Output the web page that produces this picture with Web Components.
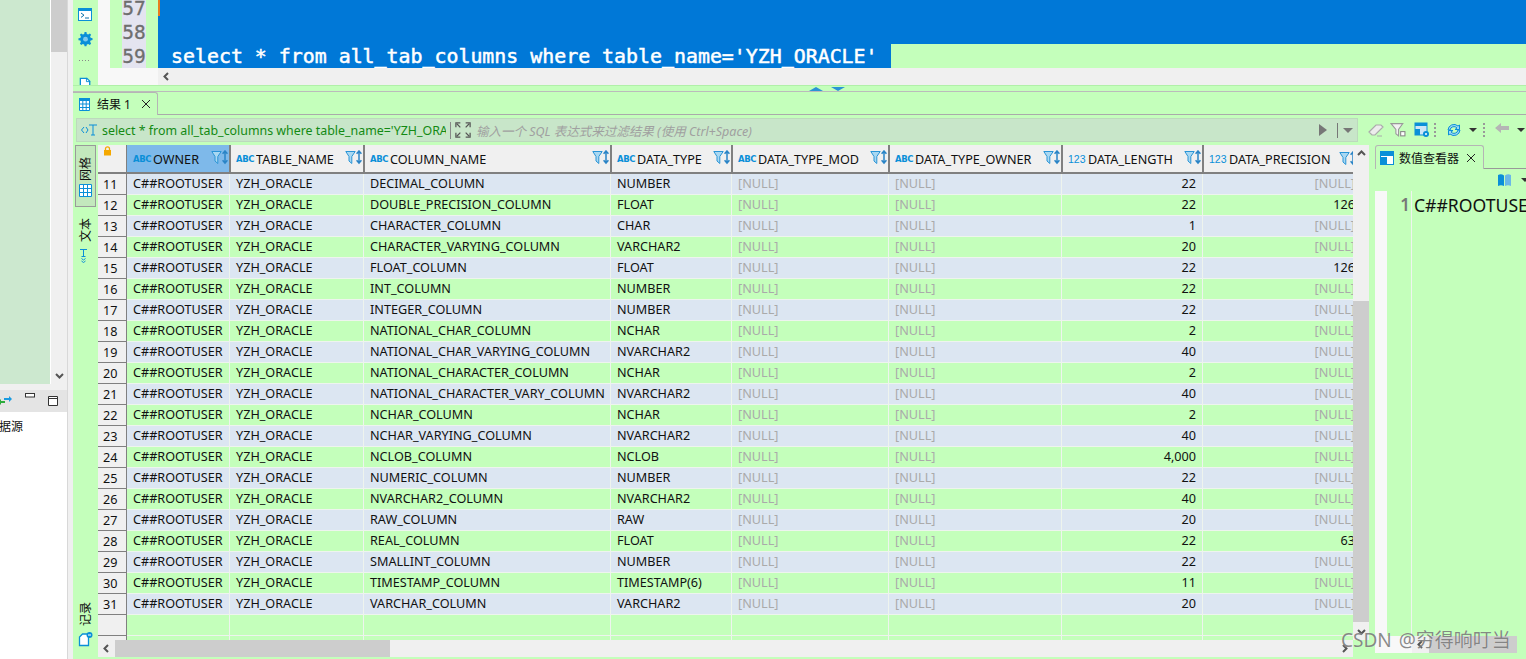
<!DOCTYPE html>
<html><head><meta charset="utf-8"><title>DBeaver</title>
<style>
html,body{margin:0;padding:0;height:659px;overflow:hidden;background:#c4ffbb}
body{font:12.65px "Noto Sans","Noto Sans CJK SC",sans-serif;color:#111}
</style></head><body>
<x-app></x-app>
<script>
const IC={
terminal:'<rect x=".5" y="1.5" width="13" height="12" fill="#fff" stroke="#0a8fd8"/><rect x="1" y="2" width="12" height="2" fill="#0a8fd8"/><path d="M3 6l3 2.2-3 2.2M7 11h4" fill="none" stroke="#0a6fa8"/>',
gear:'<path d="M7 0h2l.4 2 1.5.6L12.6 1.5 14 3l-1.1 1.7.6 1.5 2 .4v2l-2 .4-.6 1.5L14 12.3 12.6 13.8l-1.7-1.1-1.5.6L9 15.3H7l-.4-2-1.5-.6-1.7 1.1L2 12.3l1.1-1.7-.6-1.5-2-.4v-2l2-.4.6-1.5L2 3l1.4-1.5 1.7 1.1 1.5-.6z" fill="#0a8fd8"/><circle cx="8" cy="7.6" r="2.6" fill="#7cc8ee"/>',
doc:'<path d="M2.5 14V2.5h7l3 3V14z" fill="#fff" stroke="#0a8fd8" stroke-width="1.4"/><path d="M9 2v4h4" fill="none" stroke="#0a8fd8"/>',
table:'<path d="M1.5 1.5h10v12h-10z" fill="#fff" stroke="#0a8fd8"/><path d="M1 1h11v3H1z" fill="#0a8fd8"/><path d="M1.5 7h10M1.500 10.500h10M4.800 4v9.500M8.200 4v9.500" stroke="#0a8fd8" fill="none"/>',
grid:'<path d="M.5.5h12v12H.5zM.5 4.500h12M.5 8.500h12M4.500.5v12M8.500.5v12" fill="#fff" stroke="#0a8fd8"/>',
text:'<path d="M2 1.500h7M5.500 1.500v7M3.500 8.500h4" fill="none" stroke="#0a8fd8"/><path d="M3.500 10.500l2 1.500 2-1.500M3.500 13l2 1.500 2-1.500" fill="none" stroke="#0a8fd8"/>',
rec:'<path d="M1.500 13.500V5l3-3h6v11.500z" fill="#fff" stroke="#0a8fd8" stroke-width="1.300"/><circle cx="11.500" cy="3" r="3" fill="#0a8fd8"/><path d="M10 3h3" stroke="#fff"/>',
lock:'<rect x="1" y="4" width="7" height="5.500" fill="#f5a800"/><path d="M2.500 4.500V2.800a2 2 0 014 0v1.700" fill="none" stroke="#f5a800" stroke-width="1.300"/>',
filter:'<path d="M.8 1.500h9.400L6.800 6.500v7L4 11V6.500z" fill="#a9d8f2" stroke="#2a94d6"/><path d="M14 1v12M11.600 3.800L14 1l2.400 2.800M11.600 10.200L14 13l2.400-2.800" fill="none" stroke="#2a84c6" stroke-width="1.500"/>',
expand:'<path d="M1 6V1h5M12 1h5v5M1 12v5h5M17 12v5h-5" fill="none" stroke="#555" stroke-width="1.400"/><path d="M2 2l4 4M16 2l-4 4M2 16l4-4M16 16l-4-4" stroke="#555" stroke-width="1.400"/>',
eraser:'<path d="M1 10l7-7h5l2 2-8 8H4z" fill="#ececec" stroke="#aaa" stroke-width="1.200"/><path d="M9 14h5" stroke="#aaa"/>',
filt2:'<path d="M1 1.500h11L8 7v6L5.500 11V7z" fill="#f2f2f2" stroke="#999"/><rect x="10" y="9" width="4" height="4" fill="#fff" stroke="#888"/>',
gridcfg:'<rect x="1" y="1" width="12" height="12" fill="#cfe6f7" stroke="#0a8fd8"/><path d="M1 1h12v3H1zM1 7h5v6H1z" fill="#0a8fd8"/><circle cx="12" cy="12" r="3" fill="#0a8fd8"/><circle cx="12" cy="12" r="1" fill="#fff"/>',
refresh:'<path d="M2 8a6 6 0 0110-4l1.500-1v4.500H9L11 6a4 4 0 00-7 2zM14 8a6 6 0 01-10 4l-1.500 1V8.500H7L5 10a4 4 0 007-2z" fill="#9fd8f4" stroke="#0a8fd8"/>',
back:'<path d="M1 6l6-5v3h8v4H7v3z" fill="#b5b5b5"/>',
book:'<path d="M1 2c2-1 4-1 6 .5V13c-2-1-4-1-6 0z" fill="#0a8fd8"/><path d="M8 2.500c2-1.500 4-1.500 6-.5v11c-2-1-4-1-6 0z" fill="#6ab8e8"/>',
viewer:'<rect x=".5" y=".5" width="13" height="13" fill="#fff" stroke="#0a8fd8"/><path d="M1 1h12v4H1zM1 6h6v7H1z" fill="#0a8fd8"/>',
swap:'<path d="M1 8h6" stroke="#2cab3c" stroke-width="2"/><path d="M3 5L0 8l3 3z" fill="#2cab3c"/><path d="M6 5h7" stroke="#1a9be0" stroke-width="2"/><path d="M11 2l3 3-3 3z" fill="#1a9be0"/>',
min:'<rect x=".5" y=".5" width="9" height="3.500" fill="#fff" stroke="#333"/>',
max:'<path d="M.5 .5h9v9h-9zM.5 2.500h9" fill="#fff" stroke="#333"/>',
close:'<path d="M1 1l8 8M9 1l-8 8" stroke="#222" fill="none"/>'
};
function def(name,css,html,init){
  customElements.define(name,class extends HTMLElement{
    connectedCallback(){
      if(this.shadowRoot)return;
      const r=this.attachShadow({mode:'open'});
      r.innerHTML='<style>'+css+'</style>'+(typeof html==='function'?html(this):html);
      if(init)init(this,r);
    }
  });
}
def('x-icon',':host{display:inline-flex;flex:none}svg{display:block}',h=>{
  const n=h.getAttribute('name'),s=h.getAttribute('size')||16,b=h.getAttribute('box')||16;
  return `<svg width="${s}" height="${s}" viewBox="0 0 ${b} ${b}">${IC[n]}</svg>`;
});
/* scrollbar */
def('x-scroll',`
:host{display:flex;flex:none;background:#f0f0f0;overflow:hidden}
:host([dir=h]){height:17px;align-items:center}
:host([dir=v]){width:16px;flex-direction:column;align-items:stretch}
.a{flex:none;display:flex;align-items:center;justify-content:center}
:host([dir=h]) .a{width:17px;height:17px}
:host([dir=v]) .a{height:17px;width:16px}
.s{flex:var(--before,0) 0 0}
.t{background:#cdcdcd;flex:var(--thumb,1) 0 0;align-self:stretch}
.e{flex:var(--after,0) 0 0}
svg{display:block}
`,h=>{
  const v=h.getAttribute('dir')==='v';
  const ch=d=>`<svg width="9" height="9" viewBox="0 0 9 9"><path d="${d}" fill="none" stroke="#555" stroke-width="2"/></svg>`;
  const a=h.hasAttribute('noa')?'':`<div class="a">${ch(v?'M1 6l3.500-3.500L8 6':'M6 1L2.500 4.500 6 8')}</div>`;
  const b=h.hasAttribute('noz')?'':`<div class="a">${ch(v?'M1 3l3.500 3.500L8 3':'M3 1l3.500 3.500L3 8')}</div>`;
  return a+'<div class="s"></div><div class="t"></div><div class="e"></div>'+b;
});
/* left navigator column */
def('x-nav',`
:host{display:flex;flex-direction:column;width:68px;flex:none;height:659px;background:#f0f0f0;border-right:1px solid #d8d8d8;box-sizing:border-box}
.top{height:384px;display:flex;flex:none;background:#fff}
.tree{width:50px;background:#cce8cf;flex:none;margin-right:1px}
.gap{height:6px;flex:none}
.hd{height:22px;flex:none;background:#e4e4e4;display:flex;align-items:center;gap:13px;overflow:hidden}
.hd .sw{margin-left:-2px}
.bd{flex:1;background:#fff;padding:6px 0 0;font-size:12px;line-height:18px;overflow:hidden;text-indent:-1px}
.mm{margin-left:-1px}
`,`
<div class="top"><div class="tree"></div><x-scroll dir="v" noa style="--before:0;--thumb:52;--after:315"></x-scroll></div>
<div class="gap"></div>
<div class="hd"><x-icon class="sw" name="swap" size="15" box="15"></x-icon><x-icon class="mm" name="min" size="10" box="10" style="margin-top:-6px"></x-icon><x-icon name="max" size="10" box="10"></x-icon></div>
<div class="bd">据源</div>
`);
/* SQL editor */
def('x-editor',`
:host{display:flex;flex:none;height:85px;background:#f8f8f8;overflow:hidden}
.tools{width:25px;flex:none;background:#c4ffbb;display:flex;flex-direction:column;align-items:flex-start;padding:7px 0 0 5px;box-sizing:border-box}
.tools x-icon:nth-child(2){margin-top:10px}
.dots{margin:13px 0 0 1px;height:1px;width:12px;background:repeating-linear-gradient(90deg,#888 0 1px,transparent 1px 3px);flex:none}
.tools x-icon:last-child{margin-top:15px}
.main{flex:1;min-width:0;display:flex;flex-direction:column}
.code{height:68px;overflow:hidden;flex:none;display:flex;flex-direction:column;justify-content:flex-end}
.ln{display:flex;height:24px;flex:none;font:19.9px/26px "DejaVu Sans Mono",monospace}
.g0{width:12px;background:#f8f8f8;flex:none}
.g1{width:12px;background:#c4ffbb;flex:none}
.no{width:24px;flex:none;background:#e4e4f0;color:#6e6e6e;font-size:19.5px;text-align:center;-webkit-text-stroke:.3px #6e6e6e}
.g2{width:12px;background:#c4ffbb;flex:none}
.tx{flex:1;background:#0078d7;position:relative}
.ln.s .tx{background:#c4ffbb}
.sel{background:#0078d7;color:#fff;display:inline-block;padding:0 13px 0 13px;height:24px;-webkit-text-stroke:.5px #fff}
.caret{position:absolute;left:0;top:0;width:2px;height:20px;background:#e87d1e}
.hs{display:flex;height:17px;flex:none}
.hs .pad{width:60px;background:#f8f8f8;flex:none}
x-scroll{flex:1}
`,`
<div class="tools"><x-icon name="terminal" size="15" box="15"></x-icon><x-icon name="gear" size="15"></x-icon><div class="dots"></div><x-icon name="doc" size="15"></x-icon></div>
<div class="main"><div class="code">
<div class="ln"><i class="g0"></i><i class="g1"></i><span class="no">57</span><i class="g2"></i><span class="tx"><span class="caret"></span></span></div>
<div class="ln"><i class="g0"></i><i class="g1"></i><span class="no">58</span><i class="g2"></i><span class="tx"></span></div>
<div class="ln s"><i class="g0"></i><i class="g1"></i><span class="no">59</span><i class="g2"></i><span class="tx"><span class="sel">select * from all_tab_columns where table_name='YZH_ORACLE'</span></span></div>
</div><div class="hs"><div class="pad"></div><x-scroll dir="h" noz style="--thumb:0;--before:1"></x-scroll></div></div>
`);
/* result grid */
const ROWS=[[11,'DECIMAL_COLUMN','NUMBER',22,''],[12,'DOUBLE_PRECISION_COLUMN','FLOAT',22,126],[13,'CHARACTER_COLUMN','CHAR',1,''],[14,'CHARACTER_VARYING_COLUMN','VARCHAR2',20,''],[15,'FLOAT_COLUMN','FLOAT',22,126],[16,'INT_COLUMN','NUMBER',22,''],[17,'INTEGER_COLUMN','NUMBER',22,''],[18,'NATIONAL_CHAR_COLUMN','NCHAR',2,''],[19,'NATIONAL_CHAR_VARYING_COLUMN','NVARCHAR2',40,''],[20,'NATIONAL_CHARACTER_COLUMN','NCHAR',2,''],[21,'NATIONAL_CHARACTER_VARY_COLUMN','NVARCHAR2',40,''],[22,'NCHAR_COLUMN','NCHAR',2,''],[23,'NCHAR_VARYING_COLUMN','NVARCHAR2',40,''],[24,'NCLOB_COLUMN','NCLOB','4,000',''],[25,'NUMERIC_COLUMN','NUMBER',22,''],[26,'NVARCHAR2_COLUMN','NVARCHAR2',40,''],[27,'RAW_COLUMN','RAW',20,''],[28,'REAL_COLUMN','FLOAT',22,63],[29,'SMALLINT_COLUMN','NUMBER',22,''],[30,'TIMESTAMP_COLUMN','TIMESTAMP(6)',11,''],[31,'VARCHAR_COLUMN','VARCHAR2',20,'']];
const COLS=[['OWNER',103,'a'],['TABLE_NAME',134,'a'],['COLUMN_NAME',247,'a'],['DATA_TYPE',121,'a'],['DATA_TYPE_MOD',157,'a'],['DATA_TYPE_OWNER',173,'a'],['DATA_LENGTH',141,'n'],['DATA_PRECISION',155,'n']];
const W='29px '+COLS.map(c=>c[1]+'px').join(' ');
def('x-grid',`
:host{display:block;flex:1;min-width:0;overflow:hidden;font-size:12.65px}
.r{display:grid;grid-template-columns:${W};height:21px;box-sizing:border-box;border-bottom:1px solid #eef4ee;background:#c4ffbb}
.r.b{background:#dce6f2}
.r.h{height:29px;background:#f0f0f0;border-bottom:2px solid #808080}
.c{border-right:1px solid #eef4ee;padding:0 6px;line-height:19px;white-space:nowrap;overflow:hidden;box-sizing:border-box;min-width:0}
.n{text-align:right}.null{color:#aaa}
.idx{background:#f0f0f0;border-right:1px solid #808080;border-bottom:1px solid #808080;margin-bottom:-1px;padding:1px 0 0 5px;line-height:19px}
.h .c{display:flex;align-items:center;border-right:2px solid #808080;padding:0 0 0 6px;line-height:27px;height:27px;position:relative;margin-right:-1px}
.h .c:last-child{margin-right:0}
.h .sel{background:#7eb9ea}
.h .corner{border-right:1px solid #808080;padding:1px 0 0 5px;align-items:flex-start;margin-right:0}
.ty{flex:none;width:20px;color:#0a8fd8;font:bold 8.500px/27px "DejaVu Sans",sans-serif;letter-spacing:-.4px;margin-top:1px}
.ty.num{font:10.500px/27px "Liberation Sans",sans-serif;letter-spacing:0}
.nm{flex:1;min-width:0;overflow:hidden;margin-top:2px}
.f{flex:none;margin:0 1px 0 0}
.h .c:last-child .f{margin-right:0;position:absolute;left:136px;top:6px}
`,()=>{
  let s=`<div class="r h"><div class="c corner"><x-icon name="lock" size="10" box="10"></x-icon></div>`;
  COLS.forEach((c,i)=>{s+=`<div class="c${i==0?' sel':''}"><span class="ty${c[2]=='n'?' num':''}">${c[2]=='n'?'123':'ABC'}</span><span class="nm">${c[0]}</span><x-icon class="f" name="filter" size="17" box="17"></x-icon></div>`});
  s+='</div>';
  const N='<div class="c null">[NULL]</div>';
  ROWS.forEach((r,i)=>{
    s+=`<div class="r${i%2==0?' b':''}"><div class="c idx">${r[0]}</div><div class="c">C##ROOTUSER</div><div class="c">YZH_ORACLE</div><div class="c">${r[1]}</div><div class="c">${r[2]}</div>${N}${N}<div class="c n">${r[3]}</div><div class="c n${r[4]===''?' null':''}" style="padding-right:2px">${r[4]===''?'[NULL]':r[4]}</div></div>`;
  });
  const e=`<div class="r"><div class="c idx"></div>${COLS.map(()=>'<div class="c"></div>').join('')}</div>`;
  return s+e+e;
});
def('x-sidetab',`
:host{display:flex;flex-direction:column;align-items:center;width:21px;box-sizing:border-box;flex:none;gap:6px;font-size:12px;margin-left:2px}
:host([active]){background:#c3e8bd;border:1px solid #9a9a9a;height:62px;justify-content:flex-end;padding:0 0 9px;gap:3px}
.t{writing-mode:vertical-rl;text-orientation:sideways;transform:rotate(180deg);line-height:18px}
`,h=>`<span class="t"><slot></slot></span><x-icon name="${h.getAttribute('icon')}" size="${h.getAttribute('isz')||13}" box="${h.getAttribute('isz')||13}"></x-icon>`);
/* value viewer */
def('x-viewer',`
:host{display:flex;flex-direction:column;flex:1;min-width:0;overflow:hidden}
.tabs{display:flex;height:24px;flex:none;box-sizing:border-box;border-bottom:1px solid #999}
.tab{width:109px;box-sizing:border-box;height:24px;border:1px solid #b5b5b5;border-bottom:0;border-radius:3px 3px 0 0;background:#c4ffbb;display:flex;align-items:center;padding-left:4px;gap:5px;font-size:12px;flex:none;white-space:nowrap}
.tab x-icon:last-child{margin-left:2px}
.bar{height:22px;flex:none;display:flex;align-items:center;justify-content:flex-end;gap:9px;overflow:hidden}
.cr{width:0;height:0;border:4px solid transparent;border-top:4px solid #333;margin:4px -3px 0 0}
.body{flex:1;min-height:0;display:flex;overflow:hidden}
.g0{width:12px;background:#f8f8f8;flex:none}
.no{width:25px;box-sizing:border-box;text-align:right;padding-right:1px;font-size:17px;font-weight:600;color:#777;line-height:28px;border-right:1px solid #eef4ee;flex:none}
.tx{font-size:17.600px;line-height:28px;white-space:nowrap;padding-left:2px}
.hs{display:flex;flex:none;height:17px;margin-bottom:3px}
.hs i{width:37px;flex:none;background:#f8f8f8}
x-scroll{flex:1}
`,`
<div class="tabs"><div class="tab"><x-icon name="viewer" size="14" box="14"></x-icon>数值查看器<x-icon name="close" size="10" box="10"></x-icon></div></div>
<div class="bar"><x-icon name="book" size="15" box="15"></x-icon><i class="cr"></i></div>
<div class="body"><i class="g0"></i><div class="no">1</div><div class="tx">C##ROOTUSER</div></div>
<div class="hs"><i></i><x-scroll dir="h" noz style="--before:0;--thumb:88;--after:0;margin-right:9px"></x-scroll></div>
`);
/* results panel */
def('x-results',`
:host{display:flex;flex-direction:column;flex:1;min-height:0;background:#c4ffbb}
.strip{height:23px;flex:none;box-sizing:border-box;border-bottom:1px solid #aaa;display:flex}
.tab{width:85px;height:23px;box-sizing:border-box;border:1px solid #b5b5b5;border-bottom:0;border-left:0;border-radius:0 3px 0 0;display:flex;align-items:center;gap:5px;padding-left:5px;font-size:12px;white-space:nowrap;background:#c4ffbb;flex:none}
.tab x-icon:last-child{margin-left:5px}
.fl{height:30px;flex:none;display:flex;align-items:flex-start;padding-top:3px;box-sizing:border-box}
.box{margin-left:3px;width:1282px;height:24px;flex:none;box-sizing:border-box;background:#c8e6c9;border:1px solid #fff;display:flex;align-items:center;outline:1px solid #bdd9bd;outline-offset:-1px}
.q{width:374px;box-sizing:border-box;padding-right:4px;display:flex;align-items:center;color:#138a13;font-size:12.400px;overflow:hidden;white-space:nowrap;flex:none;border-right:1px solid #888;height:17px}
.q svg{flex:none;margin:0 4px 0 3px}
.q span{overflow:hidden;flex:1;min-width:0}
.ex{margin:0 5px 0 4px;flex:none}
.ph{color:#a0a0a0;font-style:italic;font-size:12.500px;flex:1;white-space:nowrap;overflow:hidden}
.run{width:0;height:0;border:6px solid transparent;border-left:8px solid #777;border-right:0;flex:none}
.sp{width:1px;height:15px;background:#777;margin:0 5px 0 10px;flex:none}
.cr{width:0;height:0;border:5px solid transparent;border-top:5px solid #777;border-bottom:0;margin-right:4px;flex:none}
.tb{flex:1;display:flex;align-items:center;height:24px;padding-left:10px;overflow:hidden}
.tb .c2{width:0;height:0;border:4px solid transparent;border-top:4px solid #333;border-bottom:0;flex:none}
.tb .d{width:2px;height:14px;background:repeating-linear-gradient(#999 0 2px,transparent 2px 4px);flex:none}
.content{flex:1;min-height:0;display:flex}
.side{width:25px;flex:none;display:flex;flex-direction:column;align-items:flex-start;height:503px}
.gridwrap{width:1271px;flex:none;display:flex;flex-direction:column;height:512px}
.gr{flex:1;min-height:0;display:flex}
.gap{width:6px;flex:none}
.sp1{height:11px;flex:none}.grow{flex:1}
x-grid{height:495px;flex:none;width:1255px}
.hs{flex:none;display:flex}
.hs x-scroll{flex:1}
.right{flex:1;min-width:0;display:flex;height:511px}
`,`
<div class="strip"><div class="tab"><x-icon name="table" size="14" box="14"></x-icon>结果 1<x-icon name="close" size="10" box="10"></x-icon></div></div>
<div class="fl"><div class="box"><div class="q"><svg width="18" height="14" viewBox="0 0 18 14"><path d="M4 4L1.500 7 4 10M6 4l2 3-2 3" fill="none" stroke="#0a8fd8"/><path d="M9 2h8M13 2v10M11 12h4" fill="none" stroke="#0a8fd8"/></svg><span>select * from all_tab_columns where table_name='YZH_ORACLE'</span></div><x-icon class="ex" name="expand" size="16" box="18"></x-icon><div class="ph">输入一个 SQL 表达式来过滤结果 (使用 Ctrl+Space)</div><i class="run"></i><i class="sp"></i><i class="cr"></i></div>
<div class="tb"><x-icon name="eraser" size="16"></x-icon><x-icon name="filt2" size="16" box="15" style="margin-left:6px"></x-icon><x-icon name="gridcfg" size="16" style="margin-left:8px"></x-icon><i class="d" style="margin-left:4px"></i><x-icon name="refresh" size="16" style="margin-left:10px"></x-icon><i class="c2" style="margin-left:7px"></i><i class="d" style="margin-left:6px"></i><x-icon name="back" size="16" style="margin-left:9px"></x-icon><i class="c2" style="margin-left:7px"></i></div></div>
<div class="content">
<div class="side"><x-sidetab active icon="grid">网格</x-sidetab><div class="sp1"></div><x-sidetab icon="text" isz="16">文本</x-sidetab><div class="grow"></div><x-sidetab icon="rec" isz="16">记录</x-sidetab></div>
<div class="gridwrap"><div class="gr"><x-grid></x-grid><x-scroll dir="v" style="--before:139;--thumb:321;--after:1"></x-scroll></div>
<div class="hs"><x-scroll dir="h" style="--before:0;--thumb:275;--after:947;margin-right:16px"></x-scroll></div></div>
<div class="gap"></div>
<div class="right"><x-viewer></x-viewer></div>
</div>
`);
def('x-app',`
:host{display:flex;width:1526px;height:659px;overflow:hidden;position:relative}
.gut{width:5px;flex:none;background:#f0f0f0}
.main{flex:1;min-width:0;display:flex;flex-direction:column}
.sash{height:7px;flex:none;background:#c4ffbb;border-top:1px solid #b0f0a8;border-bottom:1px solid #bbb;box-sizing:border-box;display:flex;justify-content:center;gap:8px;padding:1px 0 0 54px;align-items:flex-start}
.up,.dn{width:0;height:0;border:7px solid transparent;border-top:0;border-bottom:4px solid #2a94d6}
.dn{border-bottom:0;border-top:4px solid #2a94d6}
.mark{position:absolute;left:1341px;top:627px;font-size:19px;line-height:26px;word-spacing:2px;color:rgba(100,100,100,.75);white-space:nowrap;text-shadow:0 0 1px rgba(255,255,255,.6)}
`,`
<x-nav></x-nav><div class="gut"></div>
<div class="main"><x-editor></x-editor><div class="sash"><i class="up"></i><i class="dn"></i></div><x-results></x-results></div>
<div class="mark">CSDN @穷得响叮当</div>
`);
</script>
</body></html>
